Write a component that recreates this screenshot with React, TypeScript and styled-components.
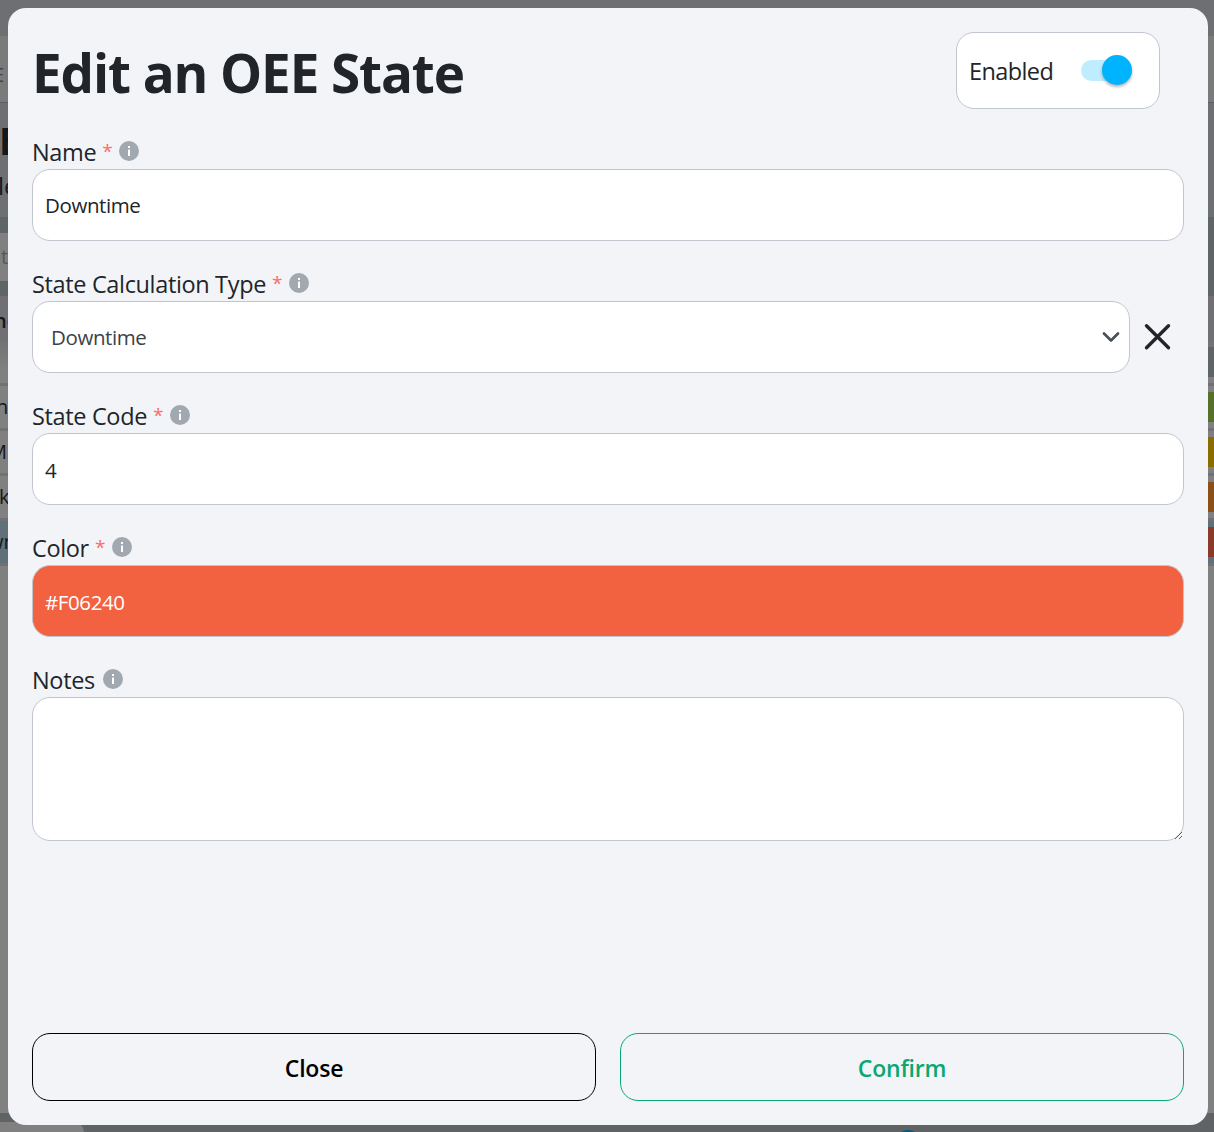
import React from "react";
import styled, { createGlobalStyle } from "styled-components";

const Global = createGlobalStyle`
  *, *::before, *::after { box-sizing: border-box; }
  body { margin: 0; overflow: hidden; background: #808080; color: #212529;
    font-family: "Open Sans", "Noto Sans", sans-serif; }
  input, textarea, button { font-family: inherit; margin: 0; }
`;

const Page = styled.div`
  display: flex;
  flex-direction: column;
  height: 1132px;
  overflow: hidden;
`;

const Band = styled.div<{ $h: number; $bg: string; $size?: number; $shift?: number; $drop?: number; $weight?: number; $color?: string }>`
  display: flex;
  flex: none;
  align-items: center;
  justify-content: space-between;
  height: ${(p) => p.$h}px;
  padding-top: ${(p) => p.$drop ?? 0}px;
  background: ${(p) => p.$bg};
  color: ${(p) => p.$color ?? "#15181a"};
  font-size: ${(p) => p.$size ?? 20}px;
  font-weight: ${(p) => p.$weight ?? 400};
  line-height: 1;
  text-indent: ${(p) => p.$shift ?? 0}px;
  overflow: hidden;
  white-space: nowrap;
`;

const Chip = styled.div<{ $color: string }>`
  width: 60px;
  height: 30px;
  background: ${(p) => p.$color};
`;

const SideFill = styled.div<{ $h: number }>`
  width: 60px;
  height: ${(p) => p.$h}px;
  margin-left: auto;
  background: #5f6467;
`;

const BottomBar = styled.div`
  display: flex;
  flex: none;
  align-items: flex-end;
  height: 19px;
  background: #5f6366;
`;

const BottomTab = styled.div`
  width: 84px;
  height: 10px;
  background: #808080;
  border-top-right-radius: 12px;
`;

const Knob = styled.div`
  width: 24px;
  height: 24px;
  margin: 0 0 -22px 812px;
  border-radius: 50%;
  background: #005b80;
`;

const Modal = styled.div`
  position: absolute;
  top: 8px;
  left: 8px;
  display: flex;
  flex-direction: column;
  width: 1200px;
  height: 1117px;
  padding: 24px;
  border-radius: 18px;
  background: #f2f4f8;
`;

const Header = styled.div`
  display: flex;
  align-items: center;
  justify-content: space-between;
  height: 77px;
  padding-right: 24px;
`;

const Title = styled.h1`
  margin: 0;
  padding-top: 4px;
  font-size: 53px;
  font-weight: 700;
  line-height: 72px;
  letter-spacing: -1.1px;
  white-space: nowrap;
`;

const EnabledBox = styled.div`
  display: flex;
  align-items: center;
  justify-content: space-between;
  width: 204px;
  height: 77px;
  padding: 0 27px 0 12px;
  border: 1px solid #c1c6ce;
  border-radius: 18px;
  background: #fff;
  font-size: 23.5px;
  letter-spacing: -0.6px;
`;

const Track = styled.div`
  display: flex;
  align-items: center;
  justify-content: flex-end;
  width: 51px;
  height: 21px;
  margin-top: -1px;
  border-radius: 11px;
  background: #bfedff;
`;

const Thumb = styled.div`
  flex: none;
  width: 30px;
  height: 30px;
  border-radius: 50%;
  background: #00b3ff;
  box-shadow: 0 2px 3px rgba(0, 0, 0, 0.3);
`;

const FieldGroup = styled.div`
  display: flex;
  flex-direction: column;
  margin-top: 28px;
`;

const Label = styled.label`
  display: flex;
  align-items: center;
  height: 32px;
  padding-bottom: 2px;
  font-size: 23.5px;
  line-height: 30px;
  letter-spacing: -0.35px;
  white-space: pre;
`;

const Star = styled.span`
  margin: -3px -1px 0 6px;
  color: #ff6b6b;
  font-size: 19px;
`;

const InfoIcon = styled.svg`
  flex: none;
  width: 20px;
  height: 20px;
  margin: -2px 0 0 8px;
`;

const Input = styled.input<{ $bg?: string; $color?: string; $drop?: number }>`
  width: 100%;
  height: 72px;
  padding: ${(p) => p.$drop ?? 0}px 12px 0;
  border: 1px solid #c1c6ce;
  border-radius: 18px;
  outline: none;
  background: ${(p) => p.$bg ?? "#fff"};
  color: ${(p) => p.$color ?? "#212529"};
  font-size: 20.5px;
  letter-spacing: -0.4px;
`;

const SelectRow = styled.div`
  display: flex;
  align-items: center;
`;

const Select = styled.div`
  display: flex;
  align-items: center;
  justify-content: space-between;
  width: 1098px;
  height: 72px;
  padding: 0 8px 0 18px;
  border: 1px solid #c1c6ce;
  border-radius: 18px;
  background: #fff;
  color: #3c4248;
  font-size: 20.5px;
  letter-spacing: -0.4px;
`;

const ClearIcon = styled.svg`
  width: 28px;
  height: 28px;
  margin-left: 13px;
`;

const TextArea = styled.textarea`
  width: 100%;
  height: 144px;
  padding: 12px;
  border: 1px solid #c1c6ce;
  border-radius: 18px;
  outline: none;
  background: #fff;
`;

const Footer = styled.div`
  display: grid;
  grid-template-columns: 1fr 1fr;
  gap: 24px;
  margin-top: auto;
`;

const Button = styled.button<{ $color: string }>`
  height: 68px;
  padding: 2px 0 0;
  border: 1px solid ${(p) => p.$color};
  border-radius: 18px;
  background: transparent;
  color: ${(p) => p.$color};
  font-size: 23px;
  font-weight: 600;
  letter-spacing: -0.2px;
`;

function Info() {
  return (
    <InfoIcon viewBox="0 0 20 20">
      <circle cx="10" cy="10" r="10" fill="#a2a8b0" />
      <path d="M9 5h2v2H9zM9 8.5h2V15H9z" fill="#fff" />
    </InfoIcon>
  );
}

function Field({ label, required, children }: { label: string; required?: boolean; children: React.ReactNode }) {
  return (
    <FieldGroup>
      <Label>
        {label}
        {required && <Star>*</Star>}
        <Info />
      </Label>
      {children}
    </FieldGroup>
  );
}

const rows = [
  { text: "n", shift: -4, chip: "#54702a", bg: "#808080" },
  { text: "M", shift: -11, chip: "#8a6d00", bg: "#808080" },
  { text: "k", shift: -1, chip: "#8a5018", bg: "#808080" },
  { text: "wn", shift: -12, chip: "#8b3a2a", bg: "#5f7079" },
];

export default function App() {
  return (
    <>
      <Global />
      <Page>
        <Band $h={36} $bg="#6e6f73" />
        <Band $h={66} $bg="#7a7a7b" $color="#3d444a" $shift={-7} $drop={12}>E</Band>
        <Band $h={1} $bg="#5b5e62" />
        <Band $h={14} $bg="#6e6f73" />
        <Band $h={46} $bg="#6e6f73" $size={37} $weight={700} $shift={-1}>E</Band>
        <Band $h={46} $bg="#6e6f73" $size={24} $shift={-2}>le</Band>
        <Band $h={8} $bg="#6e6f73" />
        <Band $h={16} $bg="#5f6467" />
        <Band $h={48} $bg="#808080" $color="#55585b" $shift={1}>
          t
          <SideFill $h={48} />
        </Band>
        <Band $h={15} $bg="#5f6467" />
        <Band $h={45} $bg="#6f6f74" $weight={600} $shift={-6} $drop={4}>ne</Band>
        <Band $h={42} $bg="linear-gradient(#727272, #808080 70%)">
          <SideFill $h={30} />
        </Band>
        <Band $h={3} $bg="#717175" />
        {rows.map((r) => (
          <React.Fragment key={r.text}>
            <Band $h={42} $bg={r.bg} $shift={r.shift}>
              <span>{r.text}</span>
              <Chip $color={r.chip} />
            </Band>
            <Band $h={3} $bg="#717175" />
          </React.Fragment>
        ))}
        <Band $h={547} $bg="#808080" />
        <BottomBar>
          <BottomTab />
          <Knob />
        </BottomBar>
      </Page>
      <Modal>
        <Header>
          <Title>Edit an OEE State</Title>
          <EnabledBox>
            Enabled
            <Track>
              <Thumb />
            </Track>
          </EnabledBox>
        </Header>
        <Field label="Name" required>
          <Input defaultValue="Downtime" />
        </Field>
        <Field label="State Calculation Type" required>
          <SelectRow>
            <Select>
              Downtime
              <svg width="20" height="20" viewBox="0 0 20 20" fill="none" stroke="#495057" strokeWidth="2.7" strokeLinecap="round" strokeLinejoin="round">
                <path d="M3 6.5l7 7 7-7" />
              </svg>
            </Select>
            <ClearIcon viewBox="0 0 28 28" fill="none" stroke="#212529" strokeWidth="3.4" strokeLinecap="round">
              <path d="M3.5 2.7l22 22M25.5 2.7l-22 22" />
            </ClearIcon>
          </SelectRow>
        </Field>
        <Field label="State Code" required>
          <Input defaultValue="4" $drop={2} />
        </Field>
        <Field label="Color" required>
          <Input defaultValue="#F06240" $bg="#f26241" $color="#fff" $drop={2} />
        </Field>
        <Field label="Notes">
          <TextArea />
        </Field>
        <Footer>
          <Button $color="#000">Close</Button>
          <Button $color="#0aa870">Confirm</Button>
        </Footer>
      </Modal>
    </>
  );
}
